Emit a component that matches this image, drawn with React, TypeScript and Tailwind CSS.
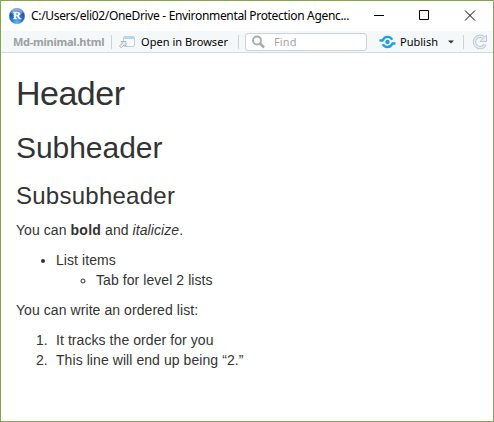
import React from "react";

function TitleBar() {
  return (
    <div className="flex h-[30px] shrink-0 items-center bg-white pl-2 text-black">
      <svg width="16" height="16" viewBox="0 0 16 16" className="mr-[6px] shrink-0">
        <defs>
          <radialGradient id="ball" cx="50%" cy="90%" r="85%">
            <stop offset="0" stopColor="#5cc0fa" />
            <stop offset="0.4" stopColor="#2677cf" />
            <stop offset="0.8" stopColor="#1f54a8" />
            <stop offset="1" stopColor="#7ba6dc" />
          </radialGradient>
        </defs>
        <circle cx="8" cy="8" r="7.8" fill="url(#ball)" stroke="#5d83bb" strokeWidth="0.4" />
        <ellipse cx="8" cy="4.3" rx="5.5" ry="3.4" fill="#a9c9ee" opacity="0.5" />
        <text x="7.9" y="11.4" textAnchor="middle" fontFamily="Liberation Serif, serif" fontWeight="bold" fontSize="11" fill="#fff" stroke="#fff" strokeWidth="0.3">R</text>
      </svg>
      <span className="w-[320px] shrink-0 whitespace-nowrap font-['Noto_Sans',sans-serif] text-[12px] leading-4 tracking-[-0.33px]">
        C:/Users/eli02/OneDrive - Environmental Protection Agenc...
      </span>
      <svg width="120" height="12" viewBox="0 0 120 12" className="ml-[19px] shrink-0" fill="none" stroke="#000">
        <path d="M4 5.500h10M49.500 0.500h9v9h-9zM95 0.500l10 10M105 0.500l-10 10" />
      </svg>
    </div>
  );
}

function Divider({ className }: { className: string }) {
  return <div className={`h-[14px] w-px shrink-0 bg-[#ccd2d6] ${className}`} />;
}

function Toolbar() {
  return (
    <div className="flex h-[22px] shrink-0 items-center overflow-hidden whitespace-nowrap border-b border-[#d2d8dc] bg-[#f4f8f9] pl-3 font-['Noto_Sans',sans-serif] text-[11px] leading-4 text-black">
      <span className="w-[92px] shrink-0 font-bold tracking-[-0.25px] text-[#9b9fa2]">Md-minimal.html</span>
      <Divider className="ml-[6px]" />
      <svg width="16" height="14" viewBox="0 0 16 14" className="ml-[7px] shrink-0" fill="none">
        <rect x="4.5" y="1.5" width="11" height="10" rx="1.5" fill="#f9fcfe" stroke="#c1cfda" />
        <path d="M5 2h10v2H5z" fill="#b7d7ee" />
        <path d="M0.500 11l3-3L2 6.500h5v5L5.300 9.800 2.300 12.800z" fill="#e8ecee" stroke="#9aa5ac" strokeWidth="0.8" />
      </svg>
      <span className="ml-[6px] w-[88px] shrink-0 tracking-[0.05px]">Open in Browser</span>
      <Divider className="ml-[9px]" />
      <div className="ml-[6px] flex h-[18px] w-[122px] shrink-0 items-center rounded-[3px] border border-[#ccd3d8] bg-white pl-[6px]">
        <svg width="14" height="14" viewBox="0 0 14 14" fill="none" stroke="#a2acb1">
          <circle cx="5" cy="5.500" r="4" strokeWidth="1.800" />
          <path d="M8 8.500l4 4" strokeWidth="2.500" />
        </svg>
        <span className="ml-[8px] pt-px tracking-[0.1px] text-[#a5a5a5]">Find</span>
      </div>
      <svg width="17" height="14" viewBox="0 0 17 14" className="ml-[12px] shrink-0" fill="none" stroke="#209fdf">
        <path d="M0.500 5.500H3.500C4.800 2.800 6.500 1.900 8.500 1.900c2.300 0 3.900 1.100 4.700 2.900M3.800 9.200C4.700 11 6.300 12 8.500 12c2.300 0 4-1.200 5-3.500H16.500" strokeWidth="2.300" />
        <circle cx="8.500" cy="7" r="2.200" fill="#209fdf" stroke="none" />
      </svg>
      <span className="ml-[4px] w-[39px] shrink-0">Publish</span>
      <svg width="6" height="4" viewBox="0 0 6 4" className="ml-[9px] shrink-0">
        <path d="M0 0.500h6L3 3.500z" fill="#333" />
      </svg>
      <Divider className="ml-[9px]" />
      <svg width="16" height="16" viewBox="0 0 16 16" className="ml-[8px] shrink-0" fill="none">
        <path d="M13.200 10.500A5.700 5.700 0 1 1 12.200 4" stroke="#bac8d8" strokeWidth="3.300" />
        <path d="M14.500 1v6.500H8z" fill="#e6edf4" stroke="#bac8d8" />
        <path d="M13.200 10.500A5.700 5.700 0 1 1 12.200 4" stroke="#e6edf4" strokeWidth="1.500" />
      </svg>
    </div>
  );
}

const steps = ["It tracks the order for you", "This line will end up being “2.”"];

export default function App() {
  return (
    <div className="flex h-[422px] w-[494px] flex-col overflow-hidden border border-[#84a74c] bg-white">
      <TitleBar />
      <Toolbar />
      <main className="px-[15px] pt-[22px] font-['Liberation_Sans',Arial,sans-serif] text-[14px] leading-5 tracking-[0.07px] text-[#333]">
        <h1 className="mb-[19px] text-[34px] leading-[37.4px] tracking-[-0.5px]">Header</h1>
        <h2 className="mb-[19px] text-[30px] leading-[33px] tracking-[-0.05px]">Subheader</h2>
        <h3 className="mb-[10px] text-[24px] leading-[26.4px] tracking-[0.25px]">Subsubheader</h3>
        <p className="mb-[10px]">
          You can <strong className="font-bold tracking-[0.25px]">bold</strong> and <em>italicize</em>.
        </p>
        <ul className="mb-[10px] list-disc pl-10">
          <li>
            List items
            <ul className="list-[circle] pl-10">
              <li>Tab for level 2 lists</li>
            </ul>
          </li>
        </ul>
        <p className="mb-[10px]">You can write an ordered list:</p>
        <ol className="pl-5">
          {steps.map((step, i) => (
            <li key={step} className="flex">
              <span className="w-5 shrink-0">{i + 1}.</span>
              <span>{step}</span>
            </li>
          ))}
        </ol>
      </main>
    </div>
  );
}
